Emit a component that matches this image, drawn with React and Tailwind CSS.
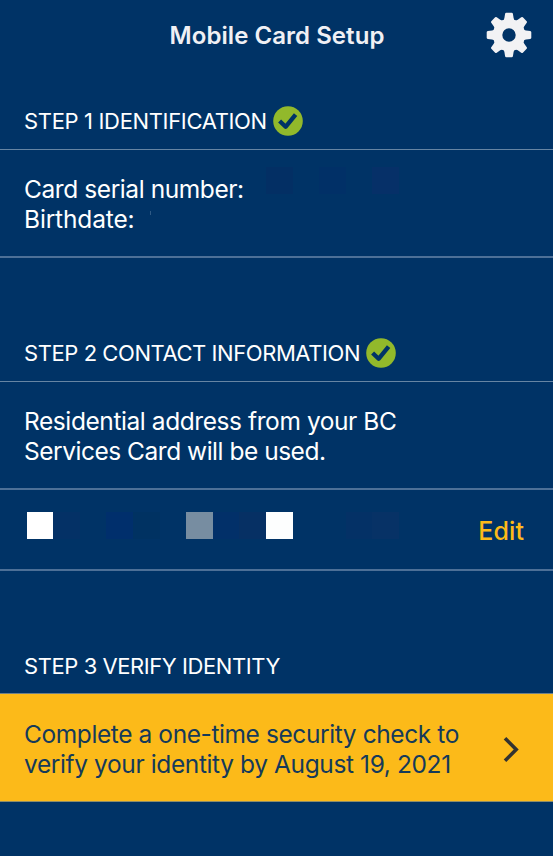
const TOOTH_ANGLES = [0, 45, 90, 135, 180, 225, 270, 315];

function Gear() {
  return (
    <svg className="block size-[46px]" viewBox="-23 -23 46 46" fill="#f2f2f4">
      <circle r="11.4" fill="none" stroke="#f2f2f4" strokeWidth="9.4" />
      {TOOTH_ANGLES.map((a) => (
        <path
          key={a}
          transform={`rotate(${a})`}
          d="M-6.6 -14 Q-4.8 -15.2 -4.6 -17 L-3.9 -21.2 Q-3.7 -22.3 -2.7 -22.3 H2.7 Q3.7 -22.3 3.9 -21.2 L4.6 -17 Q4.8 -15.2 6.6 -14 Z"
        />
      ))}
    </svg>
  );
}

function Check() {
  return (
    <svg className="block size-[30px] shrink-0" viewBox="0 0 30 30">
      <circle cx="15" cy="15" r="14.8" fill="#92b92b" />
      <path d="M6.6 15 L12.6 20.8 L22.6 8.6" fill="none" stroke="#003366" strokeWidth="4.3" strokeLinejoin="round" />
    </svg>
  );
}

function Swatches({ colors }) {
  return (
    <div className="flex">
      {colors.map((c, i) => (
        <span key={i} className={`h-[26.6px] w-[26.6px] ${c}`} />
      ))}
    </div>
  );
}

const NONE = "bg-transparent";

export default function App() {
  return (
    <div className="flex h-[856px] w-[553px] flex-col overflow-hidden bg-[#003366] font-['Inter','Liberation_Sans',sans-serif] text-white">
      <header className="grid h-[70px] shrink-0 grid-cols-[1fr_auto_1fr] items-center">
        <span />
        <h1 className="pl-px pt-px text-[24px] font-semibold leading-[30px] tracking-[0.05px] text-[#f0f0f4]">Mobile Card Setup</h1>
        <div className="flex justify-end pr-[21.5px]">
          <Gear />
        </div>
      </header>

      <div className="flex h-[80px] shrink-0 items-end gap-[6px] border-b border-[#6685a3] pb-[13px] pl-[24px]">
        <h2 className="whitespace-nowrap text-[22px] leading-[30px] tracking-[-0.34px]">STEP 1 IDENTIFICATION</h2>
        <Check />
      </div>
      <div className="flex h-[108px] shrink-0 border-b-2 border-[#4d7097] pl-[24px] pt-[25px]">
        <div className="w-[242px] whitespace-nowrap text-[24.5px] leading-[29.5px]">
          <p className="tracking-[-0.42px]">Card serial number:</p>
          <p className="tracking-[-0.15px]">
            Birthdate:<span className="ml-[16px] inline-block h-[4px] w-px bg-[#2f5a85] align-[13px]" />
          </p>
        </div>
        <div className="-mt-[8px]">
          <Swatches colors={["bg-[#032f64]", NONE, "bg-[#013067]", NONE, "bg-[#063068]"]} />
        </div>
      </div>

      <div className="flex h-[124px] shrink-0 items-end gap-[6px] border-b border-[#6685a3] pb-[13px] pl-[24px]">
        <h2 className="whitespace-nowrap text-[22px] leading-[30px] tracking-[-0.43px]">STEP 2 CONTACT INFORMATION</h2>
        <Check />
      </div>
      <div className="h-[108px] shrink-0 whitespace-nowrap border-b-2 border-[#4d7097] pl-[24px] pt-[25px] text-[24.5px] leading-[29.5px]">
        <p className="tracking-[-0.42px]">Residential address from your BC</p>
        <p className="tracking-[-0.48px]">Services Card will be used.</p>
      </div>
      <div className="flex h-[81px] shrink-0 justify-between border-b-2 border-[#4d7097] pl-[26.7px] pr-[29px] pt-[22px]">
        <Swatches
          colors={["bg-white", "bg-[#043166]", NONE, "bg-[#002f6c]", "bg-[#003262]", NONE, "bg-[#778da1]", "bg-[#023069]", "bg-[#063064]", "bg-[#fdfefe]", NONE, NONE, "bg-[#043166]", "bg-[#073266]"]}
        />
        <button className="mt-[4px] h-[30px] text-[25px] font-medium leading-[30px] tracking-[0.1px] text-[#fcba19]">Edit</button>
      </div>

      <div className="flex h-[123px] shrink-0 items-end border-b border-[#6f8188] pb-[12px] pl-[24px]">
        <h2 className="whitespace-nowrap text-[22px] leading-[30px] tracking-[-0.43px]">STEP 3 VERIFY IDENTITY</h2>
      </div>
      <div className="flex h-[108px] shrink-0 items-center justify-between border-b border-[#8e8d69] bg-[#fcba19] pl-[24px] pr-[32.7px] pt-[4px] text-[#153a5a]">
        <div className="whitespace-nowrap text-[24.5px] leading-[29.5px]">
          <p className="tracking-[-0.41px]">Complete a one-time security check to</p>
          <p className="tracking-[-0.39px]">verify your identity by August 19, 2021</p>
        </div>
        <svg className="block h-[28px] w-[18px]" viewBox="0 0 18 28" fill="none" stroke="#333331" strokeWidth="3.6">
          <path d="M3 2.2 L14.2 13.5 L3 24.8" />
        </svg>
      </div>
    </div>
  );
}
